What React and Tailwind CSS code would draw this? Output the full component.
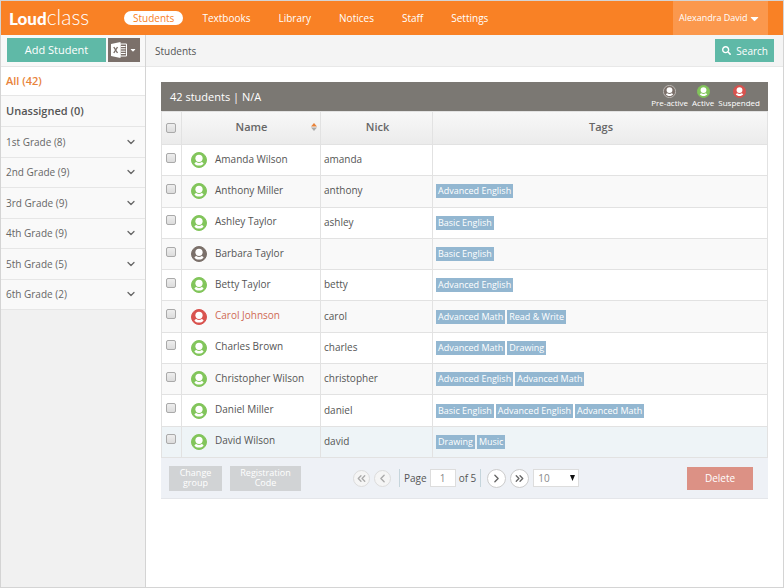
// --------------------------------------------------------
// Students page: top nav, grade sidebar and student table
// --------------------------------------------------------
import { useState } from 'react';
import { ChevronDown, ChevronLeft, ChevronRight, ChevronsLeft, ChevronsRight } from 'lucide-react';
import { FaSearch, FaCaretDown } from 'react-icons/fa';

const NAV = ['Students', 'Textbooks', 'Library', 'Notices', 'Staff', 'Settings'];

const GRADES = [
  '1st Grade (8)',
  '2nd Grade (9)',
  '3rd Grade (9)',
  '4th Grade (9)',
  '5th Grade (5)',
  '6th Grade (2)',
];

const STUDENTS = [
  { name: 'Amanda Wilson', nick: 'amanda', status: 'active', tags: [] },
  { name: 'Anthony Miller', nick: 'anthony', status: 'active', tags: ['Advanced English'] },
  { name: 'Ashley Taylor', nick: 'ashley', status: 'active', tags: ['Basic English'] },
  { name: 'Barbara Taylor', nick: '', status: 'pre', tags: ['Basic English'] },
  { name: 'Betty Taylor', nick: 'betty', status: 'active', tags: ['Advanced English'] },
  { name: 'Carol Johnson', nick: 'carol', status: 'suspended', tags: ['Advanced Math', 'Read & Write'] },
  { name: 'Charles Brown', nick: 'charles', status: 'active', tags: ['Advanced Math', 'Drawing'] },
  { name: 'Christopher Wilson', nick: 'christopher', status: 'active', tags: ['Advanced English', 'Advanced Math'] },
  { name: 'Daniel Miller', nick: 'daniel', status: 'active', tags: ['Basic English', 'Advanced English', 'Advanced Math'] },
  { name: 'David Wilson', nick: 'david', status: 'active', tags: ['Drawing', 'Music'] },
];

const STATUS_COLOR = { active: '#82c55b', pre: '#7b706a', suspended: '#d9534f' };

const CHECKBOX =
  'block size-[10px] appearance-none rounded-[2px] border border-[#aaa] bg-gradient-to-b from-[#eee] to-[#dcdcdc] checked:bg-[#f58220]';

function UserIcon({ status, outline, className }) {
  return (
    <svg viewBox="0 0 16 16" className={className} aria-hidden="true">
      <circle cx="8" cy="8" r="7.5" fill={STATUS_COLOR[status]} stroke={outline || STATUS_COLOR[status]} strokeWidth="1" />
      <circle cx="8" cy="6.3" r="3.6" fill="#fff" />
      <path d="M3.4 11.4c.4-.7 1-1.1 1.900-1.300 1.500 1.300 3.900 1.300 5.400 0 .9.2 1.500.6 1.900 1.300-1.100 1.500-2.700 2.200-4.600 2.200s-3.500-.7-4.600-2.200z" fill="#fff" />
    </svg>
  );
}

function LegendItem({ status, label }) {
  return (
    <div className="flex flex-col items-center">
      <UserIcon status={status} outline={status === 'pre' ? '#c9c5c1' : null} className="size-[13px]" />
      <span className="text-[8px] leading-[10px]">{label}</span>
    </div>
  );
}

function ExcelIcon() {
  return (
    <svg viewBox="0 0 16 16" className="size-4" aria-hidden="true">
      <path d="M9 2h6.500v12H9z" fill="none" stroke="#fff" strokeWidth="1" />
      <path d="M10 4.500h4.500M10 6.800h4.500M10 9.200h4.500M10 11.500h4.500" stroke="#fff" strokeWidth="1" />
      <path d="M0 2l9.500-2v16L0 14z" fill="#fff" />
      <path d="M2.800 5l3.700 6M6.500 5l-3.700 6" stroke="#7b706a" strokeWidth="1.400" />
    </svg>
  );
}

function PageButton({ label, icon: Icon, disabled }) {
  return (
    <button
      aria-label={label}
      disabled={disabled}
      className={`flex items-center justify-center rounded-full border ${
        disabled ? 'size-[17px] border-[#dcdcdc] bg-[#f5f5f5] text-[#aaa]' : 'size-[19px] border-[#ccc] bg-white text-[#666]'
      }`}
    >
      <Icon size={13} strokeWidth={2.5} />
    </button>
  );
}

export default function App() {
  const [checked, setChecked] = useState([]);
  const [page, setPage] = useState('1');

  const toggle = (name) => {
    setChecked(prev => (prev.includes(name) ? prev.filter(n => n !== name) : [...prev, name]));
  };

  return (
    <div className="flex min-h-screen flex-col border border-[#d4d4d4] bg-white font-['Open_Sans',sans-serif] text-[10px] leading-[14px] text-[#555]">
      {/* Top bar */}
      <header className="flex h-[34px] items-stretch bg-[#f98125] pr-[15px] text-white">
        <div className="flex w-[123px] items-baseline pt-[2px] pl-2 font-[Lato,sans-serif] leading-7">
          <span className="text-[17px] font-black">Loud</span>
          <span className="text-[21px] font-light">class</span>
        </div>
        <nav className="flex flex-1 items-center gap-[10px]">
          {NAV.map((item, i) => (
            <a
              key={item}
              href="#"
              className={i === 0 ? 'rounded-full bg-white px-[9px] text-[#f98125]' : 'px-[9px]'}
            >
              {item}
            </a>
          ))}
        </nav>
        <button className="flex w-[95px] items-center justify-between bg-[#fb984d] pr-2 pl-[6px] text-[9px] whitespace-nowrap">
          Alexandra David
          <FaCaretDown size={13} className="shrink-0" />
        </button>
      </header>

      <div className="flex flex-1">
        {/* Sidebar */}
        <aside className="w-[145px] shrink-0 border-r border-[#d4d4d4] bg-[#f1f1f1]">
          <div className="flex h-8 items-center gap-[2px] border-b border-[#e6e6e6] bg-[#f8f8f8] pb-[2px] pl-[6px]">
            <button className="h-6 w-[99px] bg-[#5fb9a7] text-[11px] text-white">Add Student</button>
            <button aria-label="Excel" className="flex h-6 w-8 items-center justify-center gap-[2px] bg-[#7b706a] text-white">
              <ExcelIcon />
              <FaCaretDown size={8} />
            </button>
          </div>
          <a href="#" className="flex h-[29px] items-center border-b border-[#e6e6e6] bg-white pl-[5px] text-[11px] font-semibold text-[#e8833a]">
            All (42)
          </a>
          <a href="#" className="flex h-[31px] items-center border-b border-[#e6e6e6] bg-[#f9f9f9] pl-[5px] text-[11px] font-semibold">
            Unassigned (0)
          </a>
          <ul className="grid h-[183px] auto-rows-fr">
            {GRADES.map((grade) => (
              <li key={grade} className="border-b border-[#e6e6e6] bg-[#f9f9f9]">
                <button className="flex size-full items-center justify-between pr-2 pl-[5px] text-[#666]">
                  {grade}
                  <ChevronDown size={12} strokeWidth={2.5} />
                </button>
              </li>
            ))}
          </ul>
        </aside>

        <main className="min-w-0 flex-1">
          <div className="flex h-8 items-center justify-between border-b border-[#e8e8e8] bg-[#f4f4f4] pr-[9px] pl-[9px]">
            <h1>Students</h1>
            <button className="flex h-[23px] w-[59px] items-center justify-end gap-[5px] bg-[#5fb9a7] pr-[6px] text-white">
              <FaSearch size={9} />
              Search
            </button>
          </div>

          <section className="mt-[15px] mr-[15px] ml-[15px]">
            <div className="flex h-[29px] items-center justify-between bg-[#7b7873] pr-2 pl-[9px] text-white">
              <h2 className="text-[11px]">42 students | N/A</h2>
              <div className="flex gap-1">
                <LegendItem status="pre" label="Pre-active" />
                <LegendItem status="active" label="Active" />
                <LegendItem status="suspended" label="Suspended" />
              </div>
            </div>

            <table className="h-[347px] w-full table-fixed border-collapse">
              <colgroup>
                <col className="w-5" />
                <col className="w-[139px]" />
                <col className="w-[112px]" />
                <col />
              </colgroup>
              <thead>
                <tr className="h-[33px] bg-gradient-to-b from-[#f8f8f8] to-[#ebebeb] text-[11px] text-[#666]">
                  <th className="border border-[#e2e2e2] pl-1">
                    <input type="checkbox" aria-label="Select all" className={CHECKBOX} />
                  </th>
                  <th className="border border-[#e2e2e2] pb-[2px] font-semibold">
                    <div className="flex items-center justify-end pr-[3px]">
                      <span className="flex-1 pl-[10px]">Name</span>
                      <svg viewBox="0 0 6 8" className="h-2 w-[6px]" aria-hidden="true">
                        <path d="M0 3.500L3 0l3 3.500z" fill="#e8833a" />
                        <path d="M0 4.500L3 8l3-3.500z" fill="#aaa" />
                      </svg>
                    </div>
                  </th>
                  <th className="border border-[#e2e2e2] pb-[2px] pl-[2px] font-semibold">Nick</th>
                  <th className="border border-[#e2e2e2] pb-[2px] pl-[2px] font-semibold">Tags</th>
                </tr>
              </thead>
              <tbody>
                {STUDENTS.map((s, i) => (
                  <tr key={s.name} className={i === 9 ? 'bg-[#eef4f7]' : i % 2 ? 'bg-[#f9f9f9]' : 'bg-white'}>
                    <td className="border border-[#e2e2e2] pb-[5px] pl-1">
                      <input
                        type="checkbox"
                        aria-label={s.name}
                        checked={checked.includes(s.name)}
                        onChange={() => toggle(s.name)}
                        className={CHECKBOX}
                      />
                    </td>
                    <td className="border border-[#e2e2e2] pl-[9px]">
                      <div className="flex items-center gap-2">
                        <UserIcon status={s.status} className="size-4" />
                        <span className={s.status === 'suspended' ? 'pb-[3px] text-[#cf6a55]' : 'pb-[3px]'}>{s.name}</span>
                      </div>
                    </td>
                    <td className="border border-[#e2e2e2] pb-[2px] pl-[3px]">{s.nick}</td>
                    <td className="border border-[#e2e2e2] pl-[3px]">
                      <div className="flex gap-[2px]">
                        {s.tags.map((tag) => (
                          <span key={tag} className="bg-[#93b7d1] px-[2px] text-[9px] leading-[14px] text-white">{tag}</span>
                        ))}
                      </div>
                    </td>
                  </tr>
                ))}
              </tbody>
            </table>

            {/* Actions and pagination */}
            <div className="flex h-[41px] items-center border-b border-[#e4e6ea] bg-[#eef1f6] pr-[15px] pl-2">
              <button disabled className="h-[25px] w-[53px] bg-[#d1d3d5] text-[9px] leading-[10px] text-white">Change<br />group</button>
              <button disabled className="ml-2 h-[25px] w-[71px] bg-[#d1d3d5] text-[9px] leading-[10px] text-white">Registration<br />Code</button>
              <div className="ml-[52px] flex items-center gap-1">
                <PageButton label="First page" icon={ChevronsLeft} disabled />
                <PageButton label="Previous page" icon={ChevronLeft} disabled />
                <label className="mr-[2px] ml-1 flex items-center gap-[3px] border-x border-[#c5d5dc] px-1">
                  Page
                  <input
                    value={page}
                    onChange={(e) => setPage(e.target.value)}
                    className="h-[18px] w-[26px] border border-[#ddd] bg-white text-center text-[#888]"
                  />
                  of 5
                </label>
                <PageButton label="Next page" icon={ChevronRight} />
                <PageButton label="Last page" icon={ChevronsRight} />
                <div className="relative">
                  <select aria-label="Rows per page" className="h-[18px] w-[46px] appearance-none border border-[#ddd] bg-white pl-1 text-[#888]">
                    <option>10</option>
                  </select>
                  <svg viewBox="0 0 5 6" className="pointer-events-none absolute top-[6px] right-1 h-[6px] w-[5px]" aria-hidden="true">
                    <path d="M0 0h5L2.500 6z" fill="#111" />
                  </svg>
                </div>
              </div>
              <button className="ml-auto h-[23px] w-[66px] bg-[#dc9185] text-white">Delete</button>
            </div>
          </section>
        </main>
      </div>
    </div>
  );
}
